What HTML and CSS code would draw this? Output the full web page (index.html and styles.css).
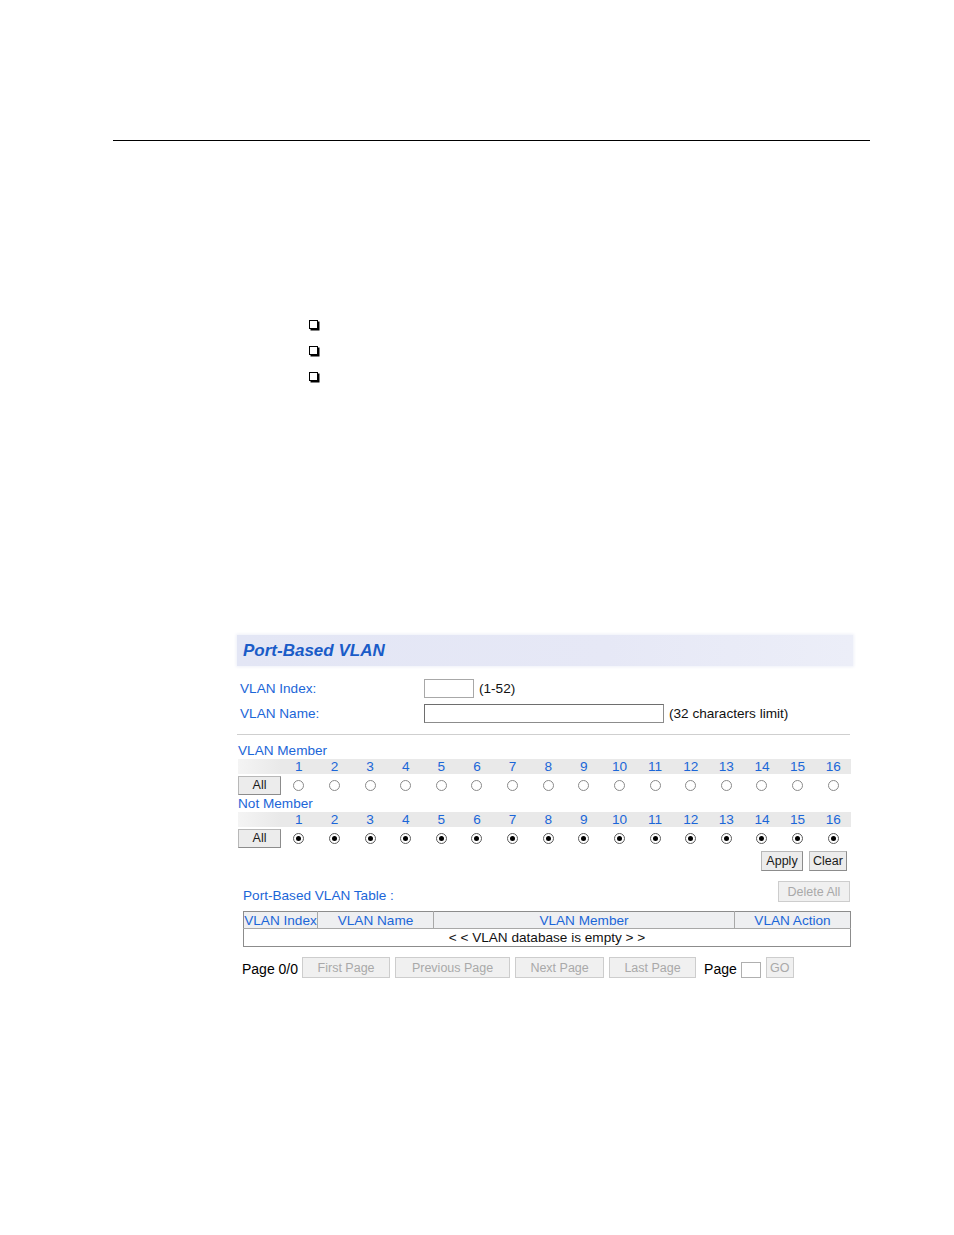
FILE: index.html
```html
<!DOCTYPE html>
<html lang="en">
<head>
<meta charset="utf-8">
<title>Port-Based VLAN</title>
<link rel="stylesheet" href="styles.css">
</head>
<body>
<div class="page">
  <div class="rule"></div>

  <ul class="bullets">
    <li><span class="box"></span></li>
    <li><span class="box"></span></li>
    <li><span class="box"></span></li>
  </ul>

  <div class="panel">
    <div class="banner"><span class="banner-title">Port-Based VLAN</span></div>

    <div class="field">
      <label class="field-label">VLAN Index:</label>
      <span class="text-input idx"></span>
      <span class="hint">(1-52)</span>
    </div>
    <div class="field">
      <label class="field-label">VLAN Name:</label>
      <span class="text-input name"></span>
      <span class="hint">(32 characters limit)</span>
    </div>

    <div class="divider"></div>

    <div class="member-grid">
      <div class="group-label">VLAN Member</div>
      <div class="num blank"></div>
      <div class="num">1</div><div class="num">2</div><div class="num">3</div><div class="num">4</div>
      <div class="num">5</div><div class="num">6</div><div class="num">7</div><div class="num">8</div>
      <div class="num">9</div><div class="num">10</div><div class="num">11</div><div class="num">12</div>
      <div class="num">13</div><div class="num">14</div><div class="num">15</div><div class="num">16</div>
      <div class="ctl"><span class="btn all">All</span></div>
      <div class="ctl"><span class="radio"></span></div><div class="ctl"><span class="radio"></span></div>
      <div class="ctl"><span class="radio"></span></div><div class="ctl"><span class="radio"></span></div>
      <div class="ctl"><span class="radio"></span></div><div class="ctl"><span class="radio"></span></div>
      <div class="ctl"><span class="radio"></span></div><div class="ctl"><span class="radio"></span></div>
      <div class="ctl"><span class="radio"></span></div><div class="ctl"><span class="radio"></span></div>
      <div class="ctl"><span class="radio"></span></div><div class="ctl"><span class="radio"></span></div>
      <div class="ctl"><span class="radio"></span></div><div class="ctl"><span class="radio"></span></div>
      <div class="ctl"><span class="radio"></span></div><div class="ctl"><span class="radio"></span></div>

      <div class="group-label">Not Member</div>
      <div class="num blank"></div>
      <div class="num">1</div><div class="num">2</div><div class="num">3</div><div class="num">4</div>
      <div class="num">5</div><div class="num">6</div><div class="num">7</div><div class="num">8</div>
      <div class="num">9</div><div class="num">10</div><div class="num">11</div><div class="num">12</div>
      <div class="num">13</div><div class="num">14</div><div class="num">15</div><div class="num">16</div>
      <div class="ctl"><span class="btn all">All</span></div>
      <div class="ctl"><span class="radio on"></span></div><div class="ctl"><span class="radio on"></span></div>
      <div class="ctl"><span class="radio on"></span></div><div class="ctl"><span class="radio on"></span></div>
      <div class="ctl"><span class="radio on"></span></div><div class="ctl"><span class="radio on"></span></div>
      <div class="ctl"><span class="radio on"></span></div><div class="ctl"><span class="radio on"></span></div>
      <div class="ctl"><span class="radio on"></span></div><div class="ctl"><span class="radio on"></span></div>
      <div class="ctl"><span class="radio on"></span></div><div class="ctl"><span class="radio on"></span></div>
      <div class="ctl"><span class="radio on"></span></div><div class="ctl"><span class="radio on"></span></div>
      <div class="ctl"><span class="radio on"></span></div><div class="ctl"><span class="radio on"></span></div>
    </div>

    <div class="actions">
      <span class="btn apply">Apply</span>
      <span class="btn clear">Clear</span>
    </div>

    <div class="table-head">
      <span class="table-title">Port-Based VLAN Table :</span>
      <span class="btn disabled delete">Delete All</span>
    </div>

    <table class="vlan-table">
      <thead>
        <tr>
          <th class="c-index">VLAN Index</th>
          <th class="c-name">VLAN Name</th>
          <th class="c-member">VLAN Member</th>
          <th class="c-action">VLAN Action</th>
        </tr>
      </thead>
      <tbody>
        <tr><td colspan="4">&lt; &lt; VLAN database is empty &gt; &gt;</td></tr>
      </tbody>
    </table>

    <div class="pager">
      <span class="pager-text">Page 0/0</span>
      <span class="btn disabled p-first">First Page</span>
      <span class="btn disabled p-prev">Previous Page</span>
      <span class="btn disabled p-next">Next Page</span>
      <span class="btn disabled p-last">Last Page</span>
      <span class="pager-text page-label">Page</span>
      <span class="text-input page-input"></span>
      <span class="btn disabled p-go">GO</span>
    </div>
  </div>
</div>
</body>
</html>
```

FILE: styles.css
```css
* { box-sizing: border-box; }

html, body {
  margin: 0;
  padding: 0;
  background: #ffffff;
}

body {
  font-family: "Liberation Sans", Arial, sans-serif;
  font-size: 13.6px;
  color: #111;
}

.page {
  width: 954px;
  padding-top: 140px;
}

.rule {
  height: 1px;
  background: #000;
  margin: 0 84px 0 113px;
}

.bullets {
  list-style: none;
  margin: 179px 0 0 309px;
  padding: 0;
}

.bullets li {
  height: 26px;
  line-height: 0;
}

.box {
  display: inline-block;
  width: 9px;
  height: 9px;
  border: 1px solid #000;
  box-shadow: 1.5px 1.5px 0 #000;
}

/* ---------- panel ---------- */
.panel {
  margin: 237px 0 0 237px;
  width: 616px;
}

.banner {
  height: 31px;
  background: linear-gradient(to right, #e3e6f5 0%, #e6e8f6 60%, #eceef8 100%);
  box-shadow: 0 0 3px 1px #eef0f8;
  padding-left: 6px;
  display: flex;
  align-items: center;
}

.banner-title {
  font-size: 17px;
  font-weight: bold;
  font-style: italic;
  color: #1a5cc8;
}

.field {
  display: flex;
  align-items: center;
  height: 21px;
  margin-top: 4px;
}

.banner + .field { margin-top: 12px; }

.field-label {
  width: 187px;
  padding-left: 3px;
  color: #1b66d8;
}

.text-input {
  display: inline-block;
  height: 19px;
  background: #fff;
  border: 1px solid #8c8c8c;
  border-top-color: #6e6e6e;
  border-left-color: #6e6e6e;
}

.text-input.idx { width: 50px; border-color: #a8a8a8; }
.text-input.name { width: 240px; }

.hint {
  margin-left: 5px;
  color: #111;
}

.divider {
  margin-top: 10px;
  width: 613px;
  height: 1px;
  background: #cfcfcf;
}

/* ---------- member grid ---------- */
.member-grid {
  margin: 8px 0 0 1px;
  width: 613px;
  display: grid;
  grid-template-columns: 43px repeat(16, 1fr);
  grid-auto-rows: auto;
}

.group-label {
  grid-column: 1 / -1;
  height: 16px;
  line-height: 16px;
  color: #1b66d8;
}

.num {
  height: 15px;
  line-height: 15px;
  text-align: center;
  color: #1b66d8;
  background: #e9e9e9;
}

.num.blank { background: linear-gradient(to right, #f4f4f4, #e9e9e9); }

.ctl {
  height: 22px;
  display: flex;
  align-items: center;
  justify-content: center;
}

.radio {
  width: 11px;
  height: 11px;
  border: 1px solid #8a8a8a;
  border-radius: 50%;
  background: #fff;
  display: flex;
  align-items: center;
  justify-content: center;
}

.radio.on { border-color: #5a5a5a; }

.radio.on::after {
  content: "";
  width: 5px;
  height: 5px;
  border-radius: 50%;
  background: #000;
}

/* ---------- buttons ---------- */
.btn {
  display: inline-flex;
  align-items: center;
  justify-content: center;
  height: 20px;
  font-size: 12.5px;
  color: #1a1a1a;
  background: #ececec;
  border: 1px solid #8c8c8c;
  border-top-color: #b8b8b8;
  border-left-color: #b8b8b8;
}

.btn.all { width: 43px; height: 19px; }
.btn.apply { width: 42px; }
.btn.clear { width: 38px; margin-left: 6px; }

.btn.disabled {
  color: #a9a9a9;
  background: #f0f0f0;
  border: 1px solid #cdcdcd;
  height: 21px;
}

.actions {
  margin-top: 2px;
  display: flex;
  justify-content: flex-end;
  padding-right: 6px;
}

/* ---------- table ---------- */
.table-head {
  margin-top: 10px;
  display: flex;
  align-items: center;
  justify-content: space-between;
  padding: 0 3px 0 6px;
  height: 21px;
}

.table-title {
  color: #1b66d8;
  margin-top: 8px;
}

.btn.delete { width: 72px; }

.vlan-table {
  margin: 9px 0 0 6px;
  width: 607px;
  border-collapse: collapse;
  border: 1px solid #8c8c8c;
  table-layout: fixed;
}

.vlan-table th {
  font-weight: normal;
  color: #1b66d8;
  background: #eeeff1;
  height: 17px;
  line-height: 15px;
  padding: 0;
  border-right: 1px solid #a8a8a8;
  border-bottom: 1px solid #a8a8a8;
  text-align: center;
  white-space: nowrap;
}

.vlan-table th:last-child { border-right: none; }

.c-index { width: 74px; }
.c-name { width: 116px; }
.c-member { width: 301px; }
.c-action { width: 116px; }

.vlan-table td {
  height: 18px;
  padding: 0;
  text-align: center;
  line-height: 16px;
  background: #fff;
  color: #111;
}

/* ---------- pager ---------- */
.pager {
  margin-top: 10px;
  padding-left: 5px;
  display: flex;
  align-items: center;
  height: 21px;
}

.pager-text {
  font-size: 14px;
  color: #000;
  margin-top: 3px;
}

.p-first { width: 88px; margin-left: 4px; }
.p-prev { width: 115px; margin-left: 5px; }
.p-next { width: 89px; margin-left: 5px; }
.p-last { width: 87px; margin-left: 5px; }
.page-label { margin-left: 8px; }
.page-input { width: 20px; height: 16px; margin: 4px 0 0 4px; border-color: #b0b0b0; }
.p-go { width: 28px; margin-left: 5px; }
```
